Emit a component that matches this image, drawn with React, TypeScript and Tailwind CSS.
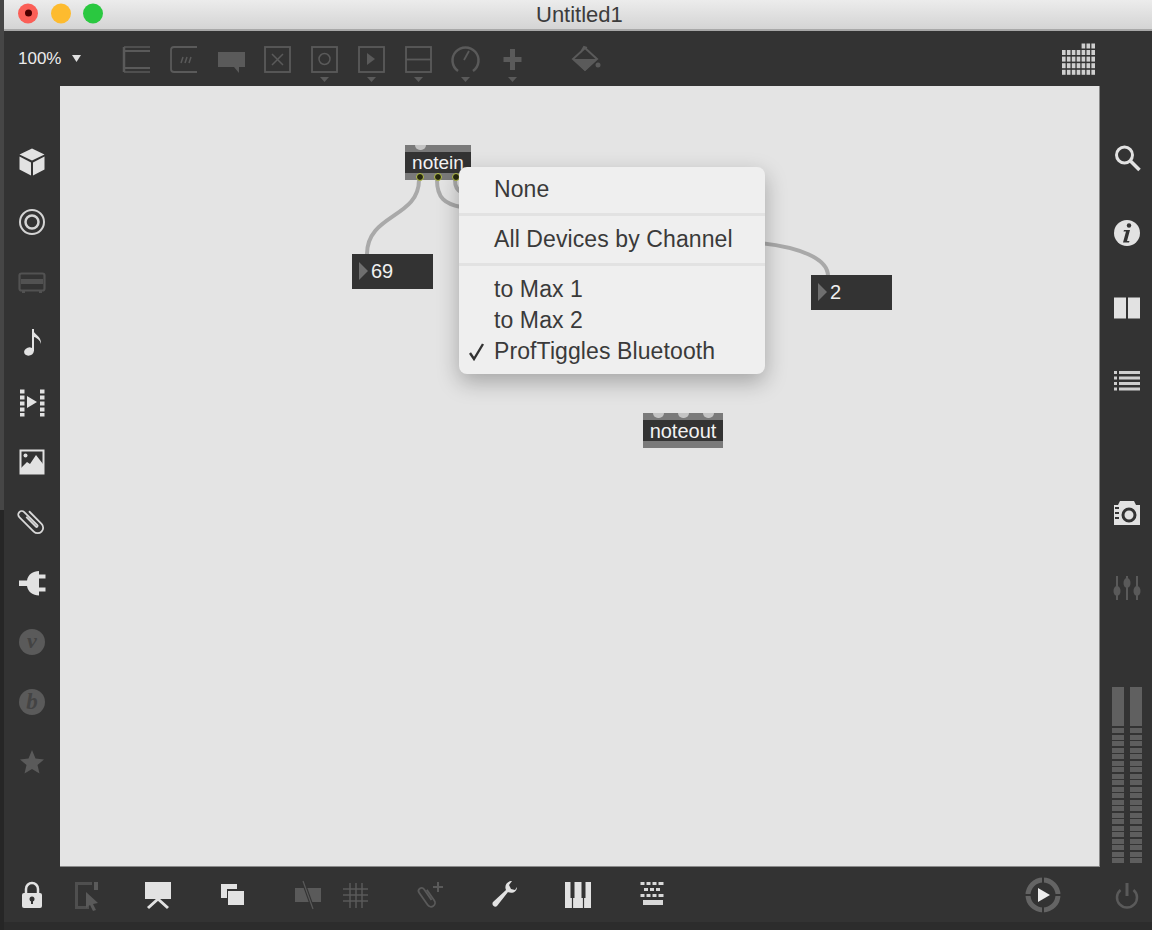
import React from "react";

const DIM = "#5a5a5a";
const LIT = "#e2e2e2";

function Ico({ children, className = "" }: { children: React.ReactNode; className?: string }) {
  return (
    <svg viewBox="0 0 32 32" className={`w-8 h-8 shrink-0 ${className}`} fill="none">
      {children}
    </svg>
  );
}

function Tool({ children, arrow = false }: { children: React.ReactNode; arrow?: boolean }) {
  return (
    <svg viewBox="0 0 47 56" className="w-[47px] h-14 shrink-0" fill="none" stroke={DIM} strokeWidth="1.800">
      {children}
      {arrow && <path d="M19 47h9l-4.500 5z" fill={DIM} stroke="none" />}
    </svg>
  );
}

const leftIcons = [
  <Ico key="cube">
    <path d="M16 2.500l12.500 6L16 14.500 3.500 8.500z M3.500 10.500L15 16.500V29.500L3.500 23.500z M28.500 10.500L17 16.500V29.500l11.500-6z" fill={LIT} />
  </Ico>,
  <Ico key="target">
    <circle cx="16" cy="16" r="12" stroke="#d4d4d4" strokeWidth="2" />
    <circle cx="16" cy="16" r="6.500" stroke="#d4d4d4" strokeWidth="2.500" />
  </Ico>,
  <Ico key="device">
    <rect x="3.500" y="7.500" width="25" height="17" rx="2" stroke="#525252" strokeWidth="2.200" />
    <path d="M5 13h22v5H5z" fill="#525252" />
    <path d="M6 25h3v2H6zM23 25h3v2h-3z" fill="#525252" />
  </Ico>,
  <Ico key="note">
    <ellipse cx="13" cy="25.500" rx="5" ry="4" fill={LIT} transform="rotate(-20 13 25.500)" />
    <path d="M17 25V3" stroke={LIT} strokeWidth="2" />
    <path d="M16.500 3c1 6 9 6 8.500 15-1-4-4-6.500-8.500-7.500z" fill={LIT} />
  </Ico>,
  <Ico key="video">
    <path
      d="M4 3.500h4.500v4H4zM4 9.500h4.500v4H4zM4 15.500h4.500v4H4zM4 21.500h4.500v4H4zM4 27h4.500v3.500H4zM24 3.500h4.500v4H24zM24 9.500h4.500v4H24zM24 15.500h4.500v4H24zM24 21.500h4.500v4H24zM24 27h4.500v3.500H24zM11 10l10 6-10 6z"
      fill={LIT}
    />
  </Ico>,
  <Ico key="image">
    <rect x="4.500" y="4.500" width="23" height="23" stroke={LIT} strokeWidth="2" />
    <path d="M5 27v-5l6-6 3 2 6-9 7 9v9z" fill={LIT} />
    <circle cx="9.500" cy="9.500" r="2" fill={LIT} />
  </Ico>,
  <Ico key="clip">
    <g transform="rotate(-45 16 16)">
      <path
        d="M21.500 7v17a5.500 5.500 0 0 1-11 0V3.500a3.500 3.500 0 0 1 7 0V22a1 1 0 0 1-2 0V9"
        stroke="#d8d8d8"
        strokeWidth="1.800"
        strokeLinecap="round"
      />
    </g>
  </Ico>,
  <Ico key="plug">
    <path d="M3 14.500h8c1-6 6-9.500 12-9.500v24.500c-6 0-11-3.500-12-9.500H3z" fill={LIT} />
    <path d="M23 8.500h6.500v4H23zM23 21.500h6.500v4H23z" fill={LIT} />
  </Ico>,
  <Ico key="v">
    <circle cx="16" cy="16" r="13" fill={DIM} />
    <text x="16" y="22" textAnchor="middle" fontSize="22" fontStyle="italic" fontWeight="700" fontFamily="'Liberation Serif', serif" fill="#434343">
      v
    </text>
  </Ico>,
  <Ico key="b">
    <circle cx="16" cy="16" r="13" fill={DIM} />
    <text x="16" y="23" textAnchor="middle" fontSize="23" fontStyle="italic" fontWeight="700" fontFamily="'Liberation Serif', serif" fill="#434343">
      b
    </text>
  </Ico>,
  <Ico key="star">
    <path d="M16 4l3.500 8.500 8.500 1-6.500 5.500 2 8.500-7.500-4.500-7.500 4.500 2-8.500-6.500-5.500 8.500-1z" fill={DIM} />
  </Ico>,
];

function Meter() {
  return (
    <div className="flex w-[12px] flex-col gap-[1.5px]">
      <div className="mb-[1px] h-[39px] bg-[#606060]" />
      {Array.from({ length: 21 }).map((_, i) => (
        <div key={i} className="h-[5px] bg-[#5e5e5e]" />
      ))}
    </div>
  );
}

function PatchObject({ name, className, inlets, outlets, textClass }: { name: string; className: string; inlets: number[]; outlets: number[]; textClass: string }) {
  return (
    <div className={`absolute flex h-[35px] flex-col ${className}`}>
      <div className="relative h-[7px] overflow-hidden bg-[#7a7a7a]">
        {inlets.map((x) => (
          <div key={x} className="absolute top-[-5px] h-[10px] w-[11px] rounded-full bg-[#c4c4c4]" style={{ left: x - 5 }} />
        ))}
      </div>
      <div className={`flex h-[21px] items-center justify-center bg-[#333333] leading-none text-[#f2f2f2] ${textClass}`}>{name}</div>
      <div className="relative h-[7px] bg-[#7a7a7a]">
        {outlets.map((x) => (
          <div key={x} className="absolute top-[0px] h-[8px] w-[8px] rounded-full border border-[#b8c24a] bg-[#26280f]" style={{ left: x - 4 }} />
        ))}
      </div>
    </div>
  );
}

function NumberBox({ value, className }: { value: string; className: string }) {
  return (
    <div className={`absolute flex h-[35px] w-[81px] items-center gap-[3px] bg-[#333333] pb-[1px] pl-[7px] text-[20px] leading-none text-[#f0f0f0] ${className}`}>
      <svg viewBox="0 0 9 18" className="h-[18px] w-[9px]">
        <path d="M0 0l9 9-9 9z" fill="#6f6f6f" />
      </svg>
      <span>{value}</span>
    </div>
  );
}

function MenuItem({ label, checked = false }: { label: string; checked?: boolean }) {
  return (
    <div className="relative flex h-[31px] items-center pl-[35px] text-[23px] leading-none tracking-[0.1px] text-[#3a3a3a]">
      {checked && (
        <svg viewBox="0 0 18 18" className="absolute left-[9px] top-[7px] h-[18px] w-[18px]" fill="none">
          <path d="M2 10l4 6 9-15" stroke="#333" strokeWidth="2.400" />
        </svg>
      )}
      {label}
    </div>
  );
}

export default function App() {
  return (
    <div className="flex h-[930px] w-[1152px] overflow-hidden bg-[#2c2c2c] font-['Liberation_Sans',sans-serif]">
      <div className="flex w-[4px] shrink-0 flex-col">
        <div className="h-[510px] bg-[#464646]" />
        <div className="flex-1 bg-[#262626]" />
      </div>
      <div className="flex w-[1148px] flex-col">
        <div className="flex h-[31px] shrink-0 items-center border-b-2 border-[#a8a8a8] bg-gradient-to-b from-[#ececec] to-[#d4d4d4] pl-[14px]">
          <div className="flex -translate-y-[1.5px] gap-[12.5px]">
            <div className="flex h-5 w-5 items-center justify-center rounded-full bg-[#fb5f57]">
              <div className="h-[7px] w-[7px] rounded-full bg-[#4d0000]" />
            </div>
            <div className="h-5 w-5 rounded-full bg-[#fdbb2f]" />
            <div className="h-5 w-5 rounded-full bg-[#2ac840]" />
          </div>
          <div className="ml-[433px] text-[22px] leading-none text-[#3c3c3c]">Untitled1</div>
        </div>

        <div className="flex h-[55px] shrink-0 items-center bg-[#333333] pl-[14px] pr-[56px]">
          <span className="w-[44px] text-[17px] leading-none text-[#ececec]">100%</span>
          <svg viewBox="0 0 9 7" className="ml-[10px] h-[7px] w-[9px]">
            <path d="M0 0h9L4.500 7z" fill="#e0e0e0" />
          </svg>
          <div className="ml-[32px] flex -translate-y-[1px]">
            <Tool>
              <path d="M11 17v25" strokeWidth="2.500" />
              <path d="M11 17h26M11 42h26" strokeWidth="1.500" />
              <path d="M11 21h26M11 38h26" strokeWidth="2" />
            </Tool>
            <Tool>
              <path d="M37 17H14a3 3 0 0 0-3 3v19a3 3 0 0 0 3 3h23" />
              <path d="M21 33l2-6M25 33l2-6M29 33l2-6" strokeWidth="1.500" />
            </Tool>
            <Tool>
              <path d="M11 22h27v15h-6v6l-5-6H11z" fill={DIM} stroke="none" />
            </Tool>
            <Tool>
              <rect x="11" y="17" width="25" height="25" />
              <path d="M18 24l11 11M29 24L18 35" strokeWidth="1.500" />
            </Tool>
            <Tool arrow>
              <rect x="11" y="17" width="25" height="25" />
              <circle cx="23.500" cy="29" r="5.500" strokeWidth="1.500" />
            </Tool>
            <Tool arrow>
              <rect x="11" y="17" width="25" height="25" />
              <path d="M19 23l8 6-8 6z" fill={DIM} stroke="none" />
            </Tool>
            <Tool arrow>
              <rect x="11" y="17" width="25" height="25" />
              <path d="M11 29.500h25" />
            </Tool>
            <Tool arrow>
              <path d="M16 41a13 13 0 1 1 15 0" strokeWidth="2.500" />
              <path d="M27 21l-5 9" />
            </Tool>
            <Tool arrow>
              <path d="M23.500 19v21M14.500 29.500h18" strokeWidth="5" />
            </Tool>
          </div>
          <svg viewBox="0 0 32 32" className="ml-[33px] h-8 w-8 translate-y-[1px]" fill="none">
            <path d="M16 4l12 11-12 11-12-11z M12 8l3-5 3 1" stroke={DIM} strokeWidth="2" />
            <path d="M4 15h24l-12 12z" fill={DIM} />
            <circle cx="29" cy="21" r="2.500" fill={DIM} />
          </svg>
          <svg viewBox="0 0 34 32" className="ml-auto h-8 w-[34px]" fill="#cfcfcf">
            {[0, 1, 2, 3].flatMap((r) =>
              [0, 1, 2, 3, 4, 5, 6].map((c) => <rect key={`${r}-${c}`} x={c * 4.900} y={7 + r * 6.600} width="3.600" height="5" />),
            )}
            {[4, 5, 6].map((c) => (
              <rect key={c} x={c * 4.900} y="0.500" width="3.600" height="5" />
            ))}
          </svg>
        </div>

        <div className="flex h-[781px] shrink-0">
          <div className="flex w-[56px] shrink-0 flex-col items-center gap-[28px] bg-[#333333] pt-[60px]">{leftIcons}</div>

          <div className="relative w-[1040px] shrink-0 border-b border-r border-[#8a8a8a] bg-[#e4e4e4]">
            <svg className="absolute inset-0 h-full w-full" fill="none" stroke="#a9a9a9" strokeWidth="4">
              <path d="M359 94C359 132 307 128 307 168" />
              <path d="M377 94C377 112 385 118 401 121" />
              <path d="M395 94C395 100 397 104 401 106" />
              <path d="M700 157C738 161 768 172 768 190" />
            </svg>
            <PatchObject name="notein" textClass="text-[19px]" className="left-[345px] top-[59px] w-[66px]" inlets={[15]} outlets={[15, 33, 51]} />
            <PatchObject name="noteout" textClass="text-[20px]" className="left-[583px] top-[327px] w-[80px]" inlets={[15, 40, 65]} outlets={[]} />
            <NumberBox value="69" className="left-[292px] top-[168px]" />
            <NumberBox value="2" className="left-[751px] top-[189px]" />

            <div className="absolute left-[399px] top-[81px] w-[306px] rounded-lg bg-[#efefef] py-[7px] shadow-[0_8px_22px_rgba(0,0,0,0.28)]">
              <MenuItem label="None" />
              <div className="my-[8px] h-[3px] bg-[#e2e2e2]" />
              <MenuItem label="All Devices by Channel" />
              <div className="my-[8px] h-[3px] bg-[#e2e2e2]" />
              <MenuItem label="to Max 1" />
              <MenuItem label="to Max 2" />
              <MenuItem label="ProfTiggles Bluetooth" checked />
            </div>
          </div>

          <div className="flex w-[52px] shrink-0 flex-col items-center bg-[#333333] pl-[2px] pt-[56px]">
            <Ico>
              <circle cx="13.500" cy="13" r="8" stroke={LIT} strokeWidth="3" />
              <path d="M19.500 19l9 9" stroke={LIT} strokeWidth="3.500" />
            </Ico>
            <Ico className="mt-[43px]">
              <circle cx="16" cy="16" r="13" fill={LIT} />
              <circle cx="18" cy="8.500" r="2.200" fill="#333" />
              <path d="M13 13h6l-3 11h2.500l-.5 1.500h-6l3-11h-2.500z" fill="#333" />
            </Ico>
            <Ico className="mt-[43px]">
              <path d="M3 5.500h12v21H3zM17 5.500h12v21H17z" fill={LIT} />
            </Ico>
            <Ico className="mt-[42px]">
              <path d="M3 5h3v3H3zM3 10.500h3v3H3zM3 16h3v3H3zM3 21.500h3v3H3zM8 5h21v3H8zM8 10.500h21v3H8zM8 16h21v3H8zM8 21.500h21v3H8z" fill="#cfcfcf" />
            </Ico>
            <Ico className="mt-[99px]">
              <path d="M3 8h4l2-4h14l2 4h4v20H3z" fill={LIT} />
              <circle cx="18" cy="18" r="6" stroke="#333" strokeWidth="3" />
              <path d="M4 11h4M4 16h4M4 21h4" stroke="#333" strokeWidth="2" />
            </Ico>
            <Ico className="mt-[43px]">
              <path d="M6 4v24M16 4v24M26 4v24" stroke={DIM} strokeWidth="2" />
              <ellipse cx="6" cy="19" rx="3.500" ry="5" fill={DIM} />
              <ellipse cx="16" cy="11" rx="3.500" ry="5" fill={DIM} />
              <ellipse cx="26" cy="19" rx="3.500" ry="5" fill={DIM} />
            </Ico>
            <div className="mb-[4px] mt-auto flex gap-[6px]">
              <Meter />
              <Meter />
            </div>
          </div>
        </div>

        <div className="flex h-[55px] shrink-0 items-center bg-[#333333] pl-[12px] pr-[9px]">
          <Ico>
            <path d="M10 15V10a6 6 0 0 1 12 0v5" stroke={LIT} strokeWidth="2.500" />
            <rect x="6" y="14" width="20" height="15" rx="2" fill={LIT} />
            <circle cx="16" cy="20" r="2.500" fill="#333" />
            <path d="M15 20h2v5h-2z" fill="#333" />
          </Ico>
          <Ico className="ml-[23px]">
            <path d="M21 4.500H5.500v24H18" stroke="#4f4f4f" strokeWidth="3" />
            <path d="M23 3h4v8h-4zM15 13l12 11-5 1 3 6-3 1-3-6-4 3z" fill={DIM} />
          </Ico>
          <Ico className="ml-[39px]">
            <path d="M3 3h26v17H3z" fill={LIT} />
            <path d="M16 20L6 29M16 20l10 9" stroke={LIT} strokeWidth="3" />
          </Ico>
          <Ico className="ml-[42px]">
            <path d="M5 5h16v5H11v9H5z" fill={LIT} />
            <rect x="12" y="12" width="16" height="14" fill={LIT} />
          </Ico>
          <Ico className="ml-[44px]">
            <path d="M3 9h26v14H3z" fill={DIM} />
            <path d="M11 2l10 28" stroke="#333" strokeWidth="3.500" />
            <path d="M11 2l10 28" stroke={DIM} strokeWidth="1.200" />
          </Ico>
          <Ico className="ml-[15px]">
            <path d="M11 4v25M17 4v25M23 4v25M4 10h25M4 16h25M4 22h25" stroke={DIM} strokeWidth="1.500" />
          </Ico>
          <Ico className="ml-[43px]">
            <g transform="rotate(-35 13 18)">
              <path d="M17 12v13a4 4 0 0 1-8 0V10a3 3 0 0 1 6 0v13" stroke={DIM} strokeWidth="1.800" />
            </g>
            <path d="M24 3v10M19 8h10" stroke={DIM} strokeWidth="2" />
          </Ico>
          <Ico className="ml-[42px]">
            <path d="M29 8c0 5-5 7-9 5L9 27c-2 2-6-1-4-4l13-12c-2-4 1-9 6-9l-3 4 2 4 4 1z" fill={LIT} />
          </Ico>
          <Ico className="ml-[42px]">
            <path d="M3 3h26v26H3z" fill={LIT} />
            <path d="M8.500 3h4v16h-4zM19.500 3h4v16h-4z" fill="#333" />
            <path d="M10.500 19v10M21.500 19v10" stroke="#333" strokeWidth="1.200" />
          </Ico>
          <Ico className="ml-[43px]">
            <path
              d="M3.500 3h4v3h-4zM9.500 3h4v3h-4zM15.500 3h4v3h-4zM21.500 3h5v3h-5zM7 9h4v3H7zM13 9h4v3h-4zM19 9h4v3h-4zM3.500 15h4v3h-4zM9.500 15h4v3h-4zM15.500 15h4v3h-4zM21.500 15h5v3h-5zM6 21h20v5H6z"
              fill="#d8d8d8"
            />
          </Ico>
          <svg viewBox="0 0 38 38" className="ml-auto h-[38px] w-[38px]" fill="none">
            <circle cx="19" cy="19" r="15" stroke="#646464" strokeWidth="5" />
            <path d="M19 0v7M19 31v7M0 19h7M31 19h7" stroke="#333" strokeWidth="2" />
            <path d="M14 12l12 7-12 7z" fill="#ececec" />
          </svg>
          <Ico className="ml-[49px]">
            <path d="M9.500 11a10 10 0 1 0 13 0" stroke={DIM} strokeWidth="2.500" />
            <path d="M16 4v13" stroke={DIM} strokeWidth="3" />
          </Ico>
        </div>
      </div>
    </div>
  );
}
